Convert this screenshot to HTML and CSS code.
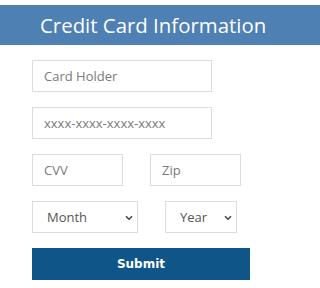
FILE: index.html
```html
<!DOCTYPE html>
<html>
<head>
<meta charset="utf-8">
<link rel="stylesheet" href="styles.css">
</head>
<body>
<h1 class="title">Credit Card Information</h1>
<form class="form">
  <input class="field wide" type="text" placeholder="Card Holder">
  <input class="field wide" type="text" placeholder="xxxx-xxxx-xxxx-xxxx">
  <div class="row row-small">
    <input class="field small" type="text" placeholder="CVV">
    <input class="field small" type="text" placeholder="Zip">
  </div>
  <div class="row row-select">
    <div class="select-wrap month">
      <select class="select"><option>Month</option></select>
      <svg class="chev" width="8" height="6" viewBox="0 0 8 6"><path d="M1 1.2 L4 4.2 L7 1.2" fill="none" stroke="#444" stroke-width="1.6"/></svg>
    </div>
    <div class="select-wrap year">
      <select class="select"><option>Year</option></select>
      <svg class="chev" width="8" height="6" viewBox="0 0 8 6"><path d="M1 1.2 L4 4.2 L7 1.2" fill="none" stroke="#444" stroke-width="1.6"/></svg>
    </div>
  </div>
  <button class="submit" type="button">Submit</button>
</form>
</body>
</html>
```
FILE: styles.css
```css
html, body {
  margin: 0;
  padding: 0;
  background: #fff;
  font-family: "Open Sans", "Noto Sans", sans-serif;
}
.title {
  margin: 5px 0 0 0;
  height: 40px;
  line-height: 40px;
  padding-left: 40px;
  background: #4e80b3;
  color: #fff;
  font-family: "Open Sans", sans-serif;
  font-size: 20.4px;
  font-weight: 400;
  white-space: nowrap;
}
.form {
  display: flex;
  flex-direction: column;
  gap: 15px;
  padding: 15px 0 0 32px;
  align-items: flex-start;
}
.field {
  box-sizing: border-box;
  height: 32px;
  border: 1px solid #dcdcdc;
  padding: 0 11px;
  font-family: "Open Sans", "Noto Sans", sans-serif;
  font-size: 13px;
  color: #555;
  outline: none;
  margin: 0;
}
.field::placeholder {
  color: #7a7a7a;
}
.wide { width: 180px; }
.row {
  display: flex;
}
.row-small { gap: 27px; }
.small { width: 91px; }
.row-select { gap: 27px; }
.select-wrap {
  position: relative;
  height: 32px;
}
.month { width: 106px; }
.year { width: 72px; }
.select {
  appearance: none;
  -webkit-appearance: none;
  box-sizing: border-box;
  width: 100%;
  height: 32px;
  border: 1px solid #dcdcdc;
  border-radius: 0;
  background: #fff;
  padding: 0 0 0 14px;
  font-family: "Open Sans", "Noto Sans", sans-serif;
  font-size: 13px;
  color: #555;
  margin: 0;
}
.chev {
  position: absolute;
  right: 5px;
  top: 14px;
}
.submit {
  width: 218px;
  height: 32px;
  border: none;
  background: #0f5587;
  color: #fff;
  font-family: "DejaVu Sans", sans-serif;
  font-weight: 700;
  font-size: 12px;
  margin: 0;
  padding: 0;
}
```
